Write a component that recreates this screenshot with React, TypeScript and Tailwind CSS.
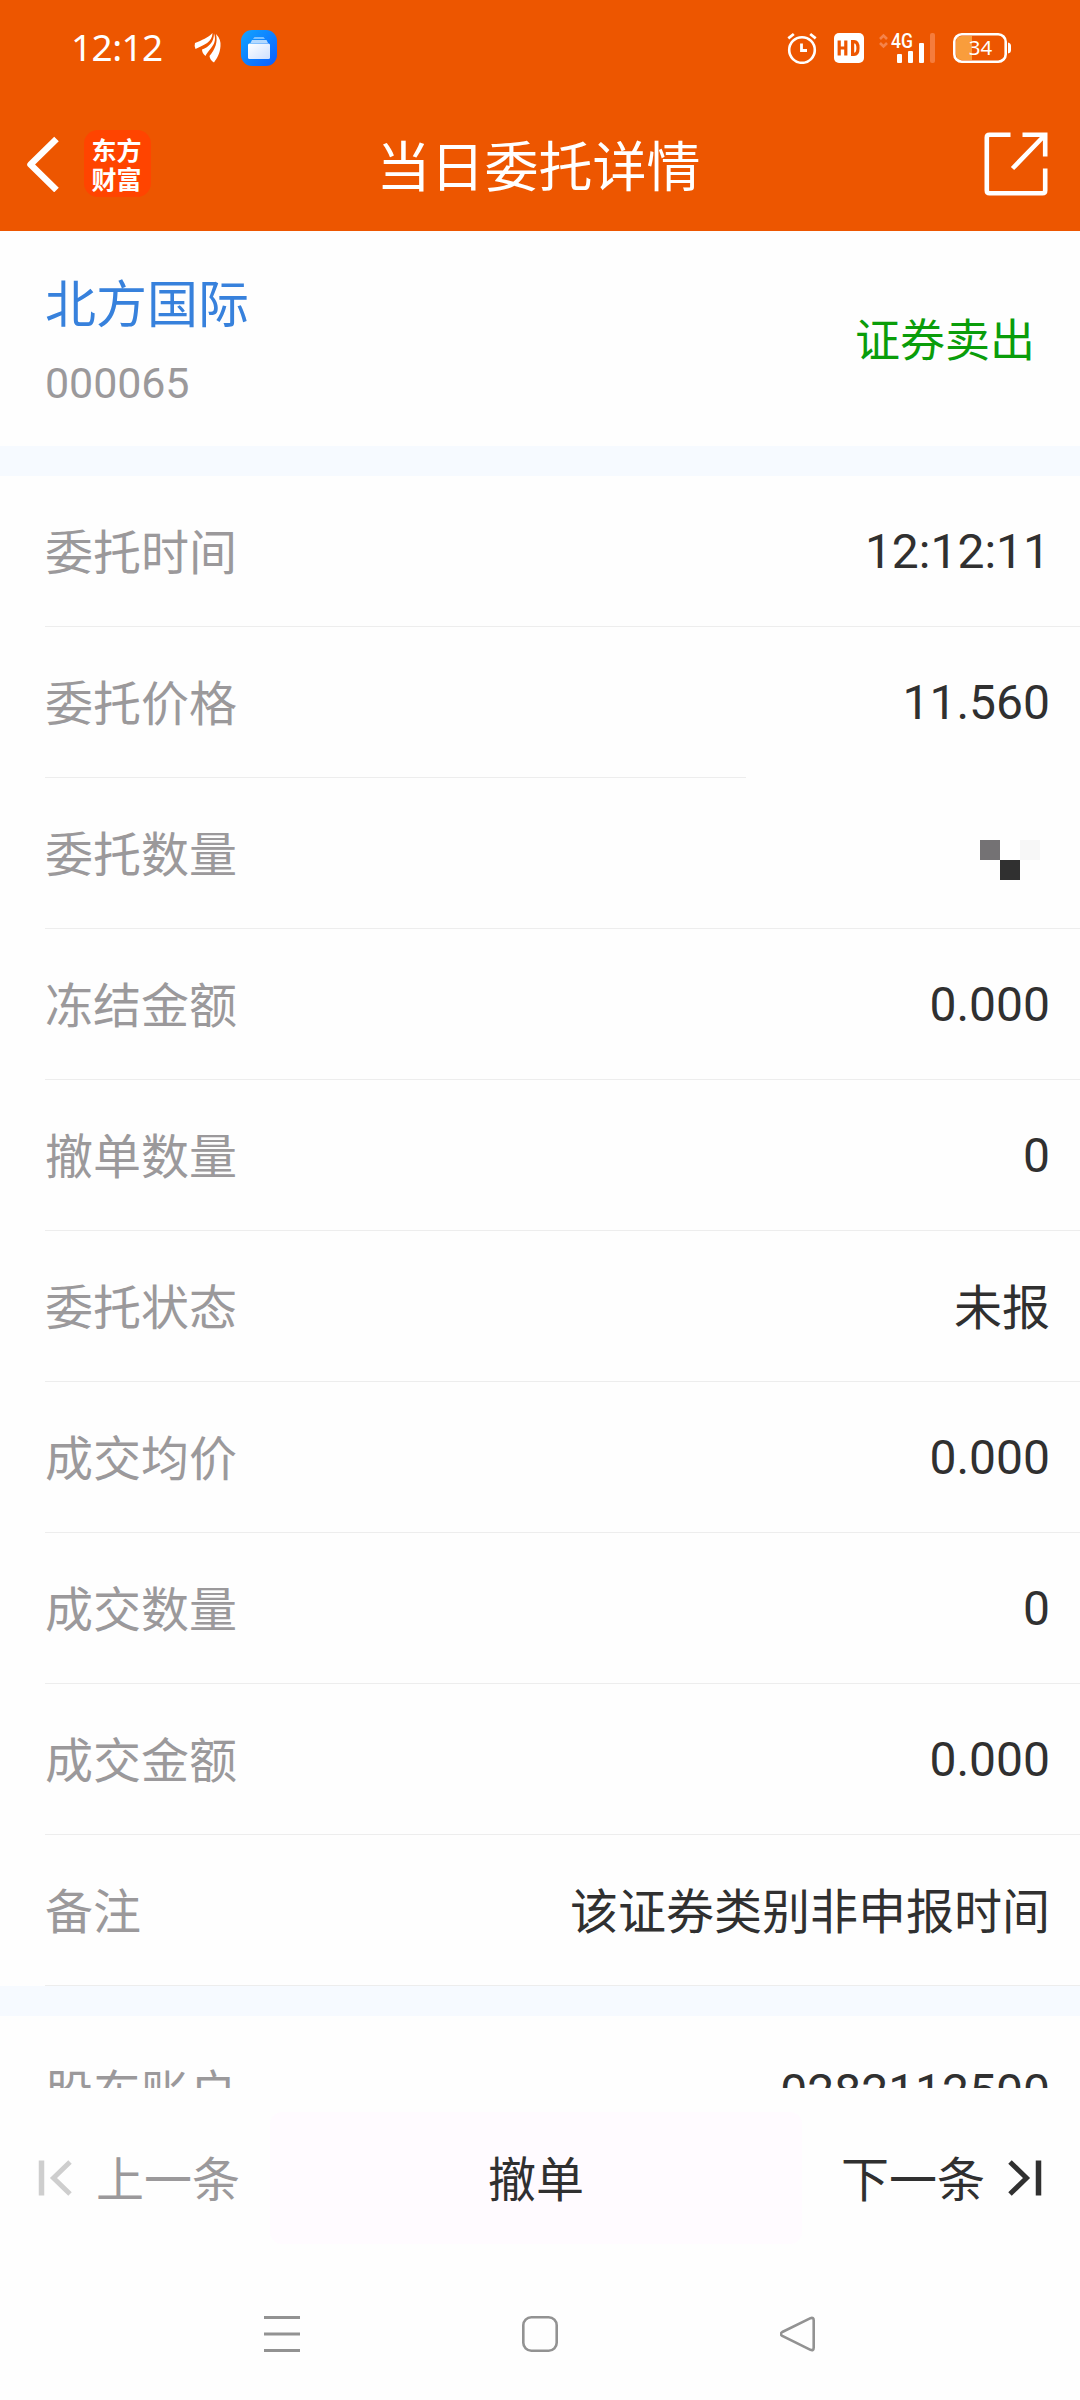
const orderRows = [
  { label: "委托时间", value: "12:12:11" },
  { label: "委托价格", value: "11.560", shortLine: true },
  { label: "委托数量", masked: true },
  { label: "冻结金额", value: "0.000" },
  { label: "撤单数量", value: "0" },
  { label: "委托状态", value: "未报", text: true },
  { label: "成交均价", value: "0.000" },
  { label: "成交数量", value: "0" },
  { label: "成交金额", value: "0.000" },
  { label: "备注", value: "该证券类别非申报时间", text: true },
];

type RowProps = {
  label: string;
  value?: string;
  text?: boolean;
  masked?: boolean;
  shortLine?: boolean;
};

function MaskedValue() {
  return (
    <div className="mr-[10px] mt-[9px] grid grid-cols-3">
      <span className="size-5 bg-[#747274]" />
      <span className="size-5 bg-white" />
      <span className="size-5 bg-[#f7f7f7]" />
      <span className="size-5" />
      <span className="size-5 bg-[#303030]" />
    </div>
  );
}

function Row({ label, value, text, masked, shortLine }: RowProps) {
  return (
    <div className="flex h-[151px] flex-col">
      <div className="flex flex-1 items-center justify-between pl-[45px] pr-[30px] pt-[5px] text-[48px] leading-[56px]">
        <span className="text-[#9b999b]">{label}</span>
        {masked ? (
          <MaskedValue />
        ) : (
          <span className={text ? "text-[#303030]" : "mb-[3px] text-[#303030]"}>{value}</span>
        )}
      </div>
      <div className={shortLine ? "ml-[45px] h-px w-[701px] bg-[#ededed]" : "ml-[45px] h-px bg-[#ededed]"} />
    </div>
  );
}

function StatusBar() {
  return (
    <div className="flex h-[96px] items-center justify-between pl-[71px] pr-[69px]">
      <div className="flex items-center">
        <span className="-mt-[2px] w-[98px] font-['Noto_Sans','Noto_Sans_CJK_SC',sans-serif] text-[37px] leading-[44px] tracking-[-0.6px]">
          12:12
        </span>
        <svg className="ml-[25px]" width="28" height="32" viewBox="0 0 28 32" fill="#fff">
          <path d="M1 11C8 8 14 6 18.500 1C18.500 10 10 13 1.500 17Q0 14 1 11Z" />
          <path d="M20 1.500C24 12 15 17 11.500 24Q8 21 8 17.500C15 15 20 10 20 1.500Z" />
          <path d="M22 2Q27 7 26.500 14C26 22 23 26 20 30.500Q16 28 15.500 24C21 17 24 11 22 2Z" />
        </svg>
        <svg className="ml-[19px]" width="36" height="36" viewBox="0 0 36 36">
          <defs>
            <linearGradient id="appBlue" x1="0" y1="0" x2="1" y2="1">
              <stop offset="0" stopColor="#12a5ff" />
              <stop offset="1" stopColor="#0a5cff" />
            </linearGradient>
            <linearGradient id="appCard" x1="0" y1="0" x2="1" y2="1">
              <stop offset="0" stopColor="#fff" />
              <stop offset="1" stopColor="#cfe0ff" />
            </linearGradient>
          </defs>
          <rect width="36" height="36" rx="11" fill="url(#appBlue)" />
          <path d="M13.500 7h9l1.500 2H12z" fill="#7cc0ff" />
          <path d="M11 10h14.500l1.500 3H9.500z" fill="#b3d9ff" />
          <rect x="7" y="13.500" width="22" height="15.500" rx="1.500" fill="url(#appCard)" />
        </svg>
      </div>

      <div className="flex items-center">
        {/* 闹钟 */}
        <svg width="30" height="32" viewBox="0 0 30 32" fill="none" stroke="#fff">
          <circle cx="15" cy="18" r="12.800" strokeWidth="2.600" />
          <path d="M14.500 11.500V18.500H20" strokeWidth="2.800" />
          <path d="M1.300 6.300L6.800 2M28.700 6.300L23.200 2" strokeWidth="2.800" />
        </svg>
        <span className="ml-[17px] flex h-[30px] w-[30px] items-center justify-center rounded-[5px] bg-white">
          <svg width="24" height="18" viewBox="0 0 24 18" fill="none" stroke="#ed5600" strokeWidth="3.200">
            <path d="M2.200 1.500V16.500M8.800 1.500V16.500M2.200 9H8.800" />
            <path d="M15.600 2.600V15.400H17Q21 15.400 21 9T17 2.600Z" />
          </svg>
        </span>
        <svg className="ml-[15px] overflow-visible" width="56" height="30" viewBox="0 0 56 30">
          <path d="M1 6L4.500 2.500L8 6M1 10L4.500 13.500L8 10" fill="none" stroke="#f5834a" strokeWidth="2.600" />
          <text
            x="12"
            y="14.500"
            fill="#fff"
            fontFamily="Roboto, sans-serif"
            fontSize="20"
            fontWeight="500"
            textLength="22"
            lengthAdjust="spacingAndGlyphs"
          >
            4G
          </text>
          <g fill="#fff">
            <rect x="18" y="21" width="5" height="9" rx="1" />
            <rect x="29" y="18" width="5" height="12" rx="1" />
            <rect x="40" y="10" width="5" height="20" rx="1" />
          </g>
          <rect x="51" y="0" width="5" height="30" rx="2" fill="#f57c3c" />
        </svg>
        <svg className="ml-[18px]" width="58" height="30" viewBox="0 0 58 30">
          <path d="M19 3H9Q3 3 3 9V21Q3 27 9 27H19Z" fill="#f99d3c" />
          <rect x="1.300" y="1.300" width="51.400" height="27.400" rx="7.500" fill="none" stroke="#fff" strokeWidth="2.600" />
          <path d="M55 9.500Q58 10 58 13V17Q58 20 55 20.500Z" fill="#fff" />
          <text x="27.500" y="22" fill="#fff" fontFamily="Noto Sans, sans-serif" fontSize="20.500" textAnchor="middle">
            34
          </text>
        </svg>
      </div>
    </div>
  );
}

function TitleBar() {
  return (
    <div className="grid h-[135px] grid-cols-[1fr_auto_1fr] items-center pl-[26px] pr-[32px]">
      <div className="flex items-center">
        <svg width="34" height="56" viewBox="0 0 34 56" fill="none" stroke="#fff" strokeWidth="6.500">
          <path d="M30.500 3L4.500 28.500L30.500 54" strokeLinejoin="round" />
        </svg>
        <div className="ml-[24px] flex h-[67px] w-[67px] flex-col items-center justify-center rounded-[14px] bg-[#ff4400] pr-[2px] font-['Noto_Sans_CJK_SC',sans-serif] text-[25px] font-bold leading-[29px]">
          <span>东方</span>
          <span>财富</span>
        </div>
      </div>
      <h1 className="ml-[3px] mt-[10px] text-[54px] leading-[64px]">当日委托详情</h1>
      <svg className="justify-self-end" width="64" height="64" viewBox="0 0 64 64" fill="none" stroke="#fff" strokeWidth="4.600">
        <path d="M26.500 2.800H5.500Q2.800 2.800 2.800 5.500V58.500Q2.800 61.200 5.500 61.200H58.500Q61.200 61.200 61.200 58.500V36.500" />
        <path d="M38.500 2.800H61.200V24.500M60 4L28.500 36.500" />
      </svg>
    </div>
  );
}

function BottomBar() {
  return (
    <div className="flex h-[180px] items-start pt-[24px] text-[48px] leading-[56px]">
      <div className="flex h-[132px] w-[270px] items-center pl-[37px] text-[#9b999b]">
        <svg width="36" height="36" viewBox="0 0 36 36" fill="none" stroke="#cecece">
          <path d="M4.500 0.500V35.500" strokeWidth="5.500" />
          <path d="M33 2L16.500 18L33 34" strokeWidth="5" />
        </svg>
        <span className="ml-[23px] mt-[6px]">上一条</span>
      </div>
      <button className="h-[132px] w-[532px] rounded-[12px] bg-[#fffbff] pt-[6px] text-[#303030]">撤单</button>
      <div className="flex h-[132px] flex-1 items-center justify-end pr-[37px] text-[#303030]">
        <span className="mr-[22px] mt-[6px]">下一条</span>
        <svg width="36" height="36" viewBox="0 0 36 36" fill="none" stroke="#303030">
          <path d="M3 2L19.500 18L3 34" strokeWidth="5" />
          <path d="M31.500 0.500V35.500" strokeWidth="5.500" />
        </svg>
      </div>
    </div>
  );
}

function NavBar() {
  return (
    <div className="flex h-[132px] items-center justify-between px-[264px]">
      <svg width="36" height="36" viewBox="0 0 36 36" stroke="#929292" strokeWidth="3">
        <path d="M0 1.500H36M0 18H36M0 34.500H36" />
      </svg>
      <svg width="36" height="36" viewBox="0 0 36 36" fill="none" stroke="#929292" strokeWidth="2.600">
        <rect x="1.300" y="1.300" width="33.400" height="33.400" rx="8" />
      </svg>
      <svg width="36" height="36" viewBox="0 0 36 36" fill="none" stroke="#929292" strokeWidth="2.600">
        <path d="M2.300 16L30.500 2.200Q33.700 1 33.700 4.500V31.500Q33.700 35 30.500 33.800L2.300 20Q-0.500 18 2.300 16Z" />
      </svg>
    </div>
  );
}

export default function App() {
  return (
    <div className="flex h-[2400px] w-[1080px] flex-col overflow-hidden bg-[#fefefe] font-[Roboto,'Noto_Sans_CJK_SC',sans-serif]">
      <header className="h-[231px] shrink-0 bg-[#ed5600] text-white">
        <StatusBar />
        <TitleBar />
      </header>

      <main className="h-[1857px] shrink-0 overflow-hidden">
        <section className="flex h-[215px] items-center justify-between px-[45px] pt-[7px]">
          <div>
            <div className="text-[51px] leading-[60px] text-[#3781dc]">北方国际</div>
            <div className="mt-[22px] text-[43px] leading-[50px] tracking-[-0.1px] text-[#9b999b]">000065</div>
          </div>
          <span className="text-[45px] leading-[52px] text-[#0a9d0a]">证券卖出</span>
        </section>
        <div className="h-[30px] bg-[#f6faff]" />
        {orderRows.map((row) => (
          <Row key={row.label} {...row} />
        ))}
        <div className="h-[30px] bg-[#f6faff]" />
        <Row label="股东账户" value="0282112500" />
      </main>

      <BottomBar />
      <NavBar />
    </div>
  );
}
